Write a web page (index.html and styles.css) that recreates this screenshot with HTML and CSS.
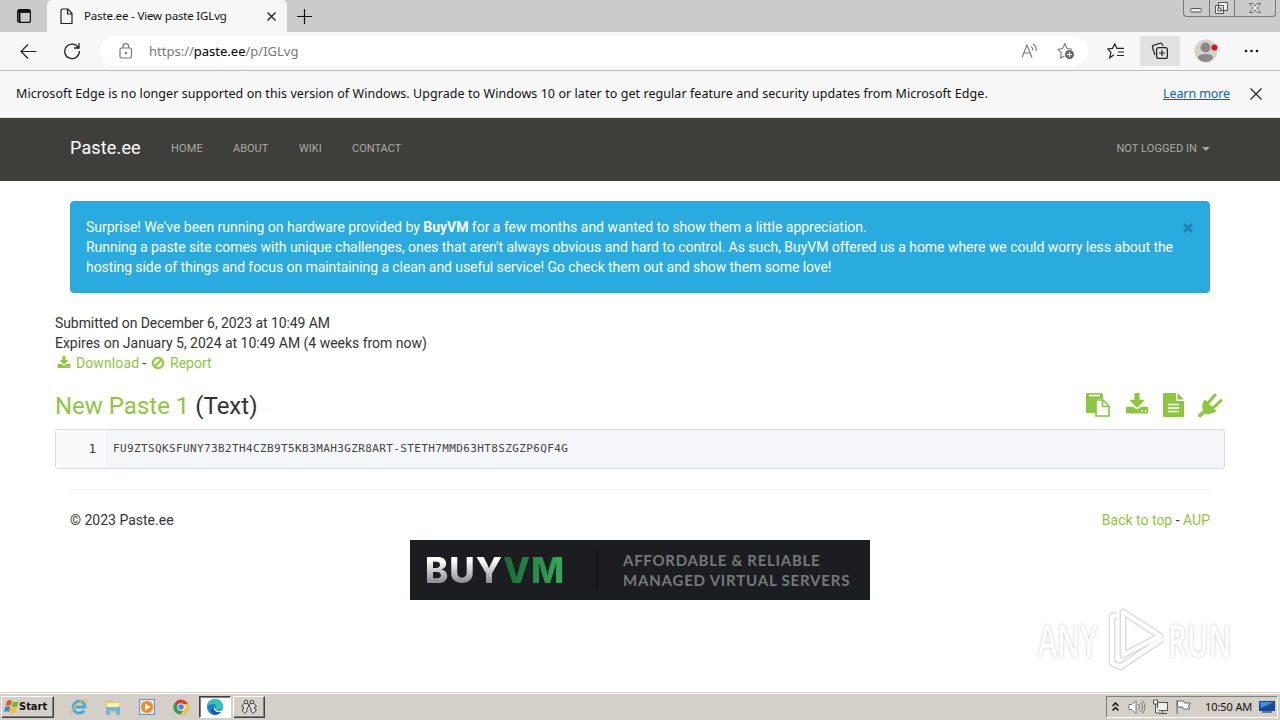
FILE: index.html
```html
<!DOCTYPE html>
<html lang="en">
<head>
    <meta charset="UTF-8">
    <meta name="viewport" content="width=device-width, initial-scale=1.0">
    <title>Paste.ee - View paste IGLvg</title>
    <link rel="stylesheet" href="styles.css">
</head>
<body>
    <svg width="0" height="0" class="defs">
        <symbol id="download" viewBox="0 0 1792 1792"><path d="M1344 1344q0-26-19-45t-45-19-45 19-19 45 19 45 45 19 45-19 19-45zm256 0q0-26-19-45t-45-19-45 19-19 45 19 45 45 19 45-19 19-45zm128-224v320q0 40-28 68t-68 28h-1472q-40 0-68-28t-28-68v-320q0-40 28-68t68-28h465l135 136q58 56 136 56t136-56l136-136h464q40 0 68 28t28 68zm-325-569q17 41-14 70l-448 448q-18 19-45 19t-45-19l-448-448q-31-29-14-70 17-39 59-39h256v-448q0-26 19-45t45-19h256q26 0 45 19t19 45v448h256q42 0 59 39z"/></symbol>
    </svg>

    <div class="tab-strip">
        <svg class="tab-actions" width="16" height="16" fill="none" stroke="#111" stroke-width="1.2"><rect x="1.600" y="1.600" width="12.800" height="12.800" rx="2"/><path d="M2 3.400h12" stroke-width="3"/><path d="M3.500 4v10" stroke-width="2"/></svg>
        <div class="tab">
            <svg width="13" height="17" fill="none" stroke="#222" stroke-width="1.2"><path d="M2 1h6l4 4.500v10H1V2zM7.500 1v5H12"/></svg>
            <span class="tab-title">Paste.ee - View paste IGLvg</span>
            <svg width="9" height="9" stroke="#222" stroke-width="1.4"><path d="M.5.5l8 8M8.500.5l-8 8"/></svg>
        </div>
        <svg class="new-tab" width="15" height="15" stroke="#111" stroke-width="1.2"><path d="M7.500 0v15M0 7.500h15"/></svg>
        <div class="window-buttons">
            <svg width="25" height="16" fill="#eee" stroke="#555"><rect x="6.500" y="8.500" width="11" height="3.500" rx="1.500"/></svg>
            <svg width="25" height="16" fill="#eee" stroke="#555"><path d="M8.500 2.500h9v8h-9zM5.500 5.500h8v8h-8z"/><rect x="8" y="8" width="3" height="3"/></svg>
            <svg width="41" height="16" fill="#eee" stroke="#666"><path d="M14.500 3.500h3.200l2.300 2.700 2.300-2.700h3.200l-3.700 4.500 3.700 4.500h-3.200L20 9.800l-2.300 2.700h-3.200l3.700-4.500z"/></svg>
        </div>
    </div>

    <div class="toolbar">
        <svg class="back" width="17" height="15" fill="none" stroke="#222" stroke-width="1.2"><path d="M16.500 7.500H1M8 .5l-7 7 7 7"/></svg>
        <svg class="reload" width="18" height="18" fill="none" stroke="#222" stroke-width="1.3"><path d="M15.500 6A7.300 7.300 0 1 0 16.300 9M16 1v5h-5"/></svg>
        <div class="address">
            <svg width="14" height="16" fill="none" stroke="#777" stroke-width="1.2"><rect x="1" y="5" width="11.500" height="10" rx="1.500"/><path d="M4 5V3.500a2.800 2.800 0 0 1 5.600 0V5"/><circle cx="6.800" cy="10" r=".6" fill="#777"/></svg>
            <span class="url">https://<b>paste.ee</b>/p/IGLvg</span>
            <svg class="read-aloud" width="17" height="16" fill="none" stroke="#777" stroke-width="1.1"><path d="M1 14.500L6 2l5 12.500M3 10h6M10 3.500q2 1 1.800 4M12 1q4 2.500 3 7"/></svg>
            <svg width="18" height="18" fill="none" stroke="#777" stroke-width="1.1"><path d="M7.500 14L3.500 16l.8-5L1 7.300l4.600-.8 2.300-4.700 2.200 4.700 5 .8"/><circle cx="12.500" cy="12.500" r="4.500" fill="#666" stroke="none"/><path d="M12.500 10v5M10 12.500h5" stroke="#fff"/></svg>
        </div>
        <svg class="favorites" width="18" height="18" fill="none" stroke="#222" stroke-width="1.2"><path d="M7 12.800l-4.300 3 1.200-5.500L.8 7l4.700-.6L7.800 2l2.100 4.400H17M11 10h6M10 13.500h7"/></svg>
        <div class="collections"><svg width="18" height="18" fill="none" stroke="#222" stroke-width="1.2"><path d="M4 13L1.500 5.500Q1 4 2.500 3.400L9 1.300q1.600-.5 2.200 1L12 4"/><rect x="5.600" y="5.600" width="10.800" height="10.800" rx="2"/><path d="M11 8v6M8 11h6"/></svg></div>
        <svg class="profile" width="24" height="24"><circle cx="12" cy="12" r="11.500" fill="#d4d2cf"/><circle cx="11.500" cy="8.500" r="5" fill="#8b8987"/><path d="M4 19q0-4 7.500-4t7.500 4q-3 4-7.500 4T4 19" fill="#8b8987"/><circle cx="20.500" cy="8.500" r="3" fill="#e01020"/></svg>
        <svg class="menu" width="15" height="4" fill="#111"><circle cx="2" cy="2" r="1.300"/><circle cx="7.500" cy="2" r="1.300"/><circle cx="13" cy="2" r="1.300"/></svg>
    </div>

    <div class="infobar">
        <span class="info-text">Microsoft Edge is no longer supported on this version of Windows. Upgrade to Windows 10 or later to get regular feature and security updates from Microsoft Edge.</span>
        <a class="learn-more">Learn more</a>
        <svg width="12" height="12" stroke="#222" stroke-width="1.2"><path d="M.5.5l11 11M11.500.5l-11 11"/></svg>
    </div>

    <div class="navbar">
        <a class="brand">Paste.ee</a>
        <a class="home">HOME</a>
        <a class="about">ABOUT</a>
        <a class="wiki">WIKI</a>
        <a class="contact">CONTACT</a>
        <a class="login">NOT LOGGED IN</a>
        <span class="caret"></span>
    </div>

    <div class="page">
        <div class="alert">
            <div class="alert-text">
                <div class="a1">Surprise! We've been running on hardware provided by <strong>BuyVM</strong> for a few months and wanted to show them a little appreciation.</div>
                <div class="a2">Running a paste site comes with unique challenges, ones that aren't always obvious and hard to control. As such, BuyVM offered us a home where we could worry less about the</div>
                <div class="a3">hosting side of things and focus on maintaining a clean and useful service! Go check them out and show them some love!</div>
            </div>
            <svg width="10" height="10" stroke="#2085ae" stroke-width="3"><path d="M1 1l8 8M9 1l-8 8"/></svg>
        </div>

        <div class="details">
            <div class="submitted">Submitted on December 6, 2023 at 10:49 AM</div>
            <div class="expires">Expires on January 5, 2024 at 10:49 AM (4 weeks from now)</div>
            <div class="actions">
                <svg width="14" height="14"><use href="#download"/></svg>
                <a class="dl">Download</a><span class="dash">-</span>
                <svg width="14" height="14" viewBox="0 0 1792 1792"><path d="M1440 893q0-161-87-295l-754 753q137 89 297 89 111 0 211.500-43.500t173.500-116.500 116-174.500 43-212.500zm-999 299l755-754q-135-91-300-91-148 0-273 73t-198 199-73 274q0 162 89 299zm1223-299q0 157-61 300t-163.500 246-245 164-298.500 61-298.500-61-245-164-163.500-246-61-300 61-299.500 163.500-245.500 245-164 298.500-61 298.500 61 245 164 163.500 245.500 61 299.500z" stroke="#8dc63f" stroke-width="60"/></svg>
                <a class="report">Report</a>
            </div>
        </div>

        <div class="paste-head">
            <h3><a>New Paste 1</a> (Text)</h3>
            <div class="paste-tools">
                <svg width="25" height="24"><path d="M1 0h14q2 0 2 2v4H12q-2 0-2 2v12H1q-1 0-1-1V1q0-1 1-1z"/><path d="M3 2.500h11" stroke="#fff" stroke-width="1.700"/><path d="M10 7h7l6 6v10H10zM16.500 7v6.500h6.500" fill="#fff" stroke="#8dc63f" stroke-width="1.700"/></svg>
                <svg width="24" height="24"><use href="#download"/></svg>
                <svg width="21" height="24"><path d="M1 0h12v7q0 1 1 1h7v15q0 1-1 1H1q-1 0-1-1V1q0-1 1-1zM14.500 0q1 .3 6 6.500h-6z"/><path d="M5 11.500h11M5 15h11M5 18.500h11" stroke="#fff" stroke-width="1.500"/></svg>
                <svg width="25" height="25"><path d="M7 6.500L18.500 18q-4.500 4.500-11.500 2.500L2.500 24.500 0 23.500l.5-2.500L5 17.500Q3 11 7 6.500z"/><path d="M10.500 9.500l6.500-7.500M15.500 14.500l7.500-7" stroke="#8dc63f" stroke-width="3" stroke-linecap="round"/></svg>
            </div>
        </div>

        <div class="code-box">
            <div class="line-no">1</div>
            <code>FU9ZTSQKSFUNY73B2TH4CZB9T5KB3MAH3GZR8ART-STETH7MMD63HT8SZGZP6QF4G</code>
        </div>

        <div class="footer">
            <span class="copy">© 2023 Paste.ee</span>
            <span class="foot-links"><a>Back to top</a> - <a>AUP</a></span>
        </div>

        <div class="banner">
            <div class="buyvm"><span class="buy">BUY</span><span class="vm">VM</span></div>
            <div class="slogan">
                <div class="s1">AFFORDABLE &amp; RELIABLE</div>
                <div class="s2">MANAGED VIRTUAL SERVERS</div>
            </div>
        </div>
    </div>

    <div class="watermark">
        <span>ANY</span>
        <svg width="62" height="66" fill="none" stroke-linejoin="round"><path d="M18 5v43L55 29zM12 9H7v47l8 4 42-28" stroke="#ddd" stroke-width="7"/><path d="M18 5v43L55 29zM12 9H7v47l8 4 42-28" stroke="#fff" stroke-width="4"/></svg>
        <span>RUN</span>
    </div>

    <div class="taskbar">
        <div class="start">
            <svg width="15" height="15"><path d="M3 2q3-2 5 0L6.500 7q-2-1.500-5 0z" fill="#e8562a"/><path d="M9 2.500q2 1.500 5.500 0L13 7.500q-3 1.500-5.500 0z" fill="#75b82b"/><path d="M1.200 8q3-1.500 5 0L5 13q-2-1.500-5 0z" fill="#3689d8"/><path d="M7.200 8.500q2 1.500 5.500 0l-1.400 5q-3 1.500-5.500 0z" fill="#f6bd20"/></svg>
            <span>Start</span>
        </div>
        <div class="launch">
            <svg width="18" height="18" fill="none"><path d="M14 12.500A6 6 0 1 1 15 9H5" stroke="#45a9e0" stroke-width="2.800"/><path d="M2 16C-1 13 12 0 16 2q1.500 1 0 3" stroke="#e8bd4a" stroke-width="1.300"/></svg>
            <svg width="18" height="18"><path d="M2 2h5l1 2h8v11H2z" fill="#e5c765"/><path d="M3 5h12v5H3z" fill="#fff2b8"/><path d="M2 9h14v8h-4v-4H6v4H2z" fill="#78b5dc"/></svg>
            <svg width="18" height="18"><rect x="1.500" y="1.500" width="15" height="15" fill="#d5e7f4" stroke="#629ac4"/><circle cx="9" cy="9" r="6" fill="#f38a19"/><path d="M7 5.500v7L12.500 9z" fill="#fff"/></svg>
            <svg width="18" height="18"><circle cx="9" cy="9" r="7.500" fill="#e33b2e"/><path d="M2.500 5.200A7.500 7.500 0 0 0 8.500 16.500L12 11 9 9z" fill="#2ba24c"/><path d="M8.500 16.500A7.500 7.500 0 0 0 15.800 6H9l3 5z" fill="#fcc934"/><circle cx="9" cy="9" r="3.700" fill="#fff"/><circle cx="9" cy="9" r="2.800" fill="#4285f4"/></svg>
        </div>
        <div class="task active"><svg width="18" height="18"><circle cx="9" cy="9" r="8" fill="#1683d0"/><path d="M1 8Q2 1 9 1q7 .5 8 7 0 4-5 4-3 0-2-2 1-4-3-4-4 0-6 2z" fill="#36c6b0"/><path d="M7 8q-2 6 8 6-3 3-7 3-5-4-1-9z" fill="#1356a4"/><path d="M9 8q-1 4 3 5 3 0 4.500-1l-1 2Q8 15 8 10z" fill="#fff"/></svg></div>
        <div class="task"><svg width="18" height="16" fill="#e4e1dc" stroke="#444"><path d="M1.500 7.500L4.500 4h3l1.500 3-2 2v3l-2 2.500L2.500 12v-2h1V8z"/><path d="M9 7l1.500-3h3l3 3.500-2 .5v2h1.500v2L13 14.500 11 12V9z"/><circle cx="6" cy="3" r="1.800"/><circle cx="12" cy="3" r="1.800"/></svg></div>
        <div class="tray">
            <svg width="7" height="10" fill="none" stroke="#111" stroke-width="1.500"><path d="M.5 4l3-3 3 3M.5 8.500l3-3 3 3"/></svg>
            <svg class="volume" width="18" height="16" fill="#fff" stroke="#777"><path d="M1 5.500h3l4-4v13l-4-4H1z"/><path d="M10.500 5q2 3 0 6M12.500 3q4 5 0 10M14.500 1.500q5 6.500 0 13" fill="none"/></svg>
            <svg class="network" width="17" height="16" fill="#eee" stroke="#555"><rect x="5.500" y="3.500" width="10" height="8"/><path d="M7 14.500h8M10.500 12v2M1.500 1v4h4V1zM3.500 5v9h4" /></svg>
            <svg class="flag" width="17" height="16" fill="#fff" stroke="#666"><path d="M2 15V1M2.500 2h6l1 2h6l-2 3 1 3h-6l-1-2h-5z"/></svg>
            <span class="clock">10:50 AM</span>
            <svg class="desktop" width="16" height="14"><rect y="1" width="16" height="10" fill="#164aa2"/><path d="M1 2h14L2 8z" fill="#468ee0"/><path d="M3 12h10" stroke="#777" stroke-width="2"/></svg>
        </div>
    </div>
</body>
</html>
```
FILE: styles.css
```css
* {
    box-sizing: border-box;
}
body {
    margin: 0;
    width: 1280px;
    height: 720px;
    overflow: hidden;
    display: flex;
    flex-direction: column;
    background: #fff;
    font-family: Roboto, sans-serif;
    font-size: 14px;
    line-height: 20px;
    color: #333;
}
svg {
    display: block;
    flex: none;
}
.defs {
    position: absolute;
}
span, a, code {
    white-space: nowrap;
}
.tab-strip, .toolbar, .infobar, .taskbar {
    display: flex;
    align-items: center;
    flex: none;
    font-family: "Noto Sans", sans-serif;
    color: #111;
}
.tab-strip {
    height: 32px;
    background: #cbcbcb;
}
.tab-actions {
    margin-left: 16px;
}
.tab {
    display: flex;
    align-items: center;
    align-self: stretch;
    width: 240px;
    margin-left: 15px;
    padding-left: 13px;
    background: #f7f7f7;
    border-radius: 5px 5px 0 0;
}
.tab-title {
    width: 183px;
    margin-left: 11px;
    font-size: 11.5px;
    letter-spacing: -0.17px;
}
.new-tab {
    margin-left: 10px;
}
.window-buttons {
    display: flex;
    align-self: flex-start;
    height: 17px;
    margin-left: auto;
    margin-right: 4px;
    border: 1px solid #777;
    border-top: 0;
    border-radius: 0 0 4px 4px;
}
.window-buttons svg + svg {
    border-left: 1px solid #777;
}
.toolbar {
    height: 39px;
    background: #f7f7f7;
    border-bottom: 1px solid #bbb;
}
.back {
    margin-left: 20px;
}
.reload {
    margin-left: 26px;
}
.address {
    display: flex;
    align-items: center;
    width: 988px;
    height: 30px;
    margin-left: 19px;
    padding-left: 19px;
    border-radius: 15px;
    background: #fff;
}
.url {
    width: 872px;
    margin-left: 16px;
    font-size: 13px;
    color: #777;
}
.url b {
    font-weight: normal;
    color: #000;
}
.read-aloud {
    margin-right: 19px;
}
.favorites {
    margin-left: 19px;
}
.collections {
    display: flex;
    align-items: center;
    justify-content: center;
    width: 40px;
    height: 30px;
    margin-left: 15px;
    background: #e2e2e2;
}
.profile {
    margin-left: 14px;
}
.menu {
    margin-left: 26px;
}
.infobar {
    height: 47px;
    padding-left: 16px;
    background: #f7f7f7;
    border-bottom: 1px solid #e5e5dc;
    font-size: 12.5px;
}
.info-text {
    width: 1147px;
    letter-spacing: 0.063px;
}
.learn-more {
    width: 87px;
    letter-spacing: -0.1px;
    color: #0067b8;
    text-decoration: underline;
}
.navbar {
    display: flex;
    align-items: center;
    flex: none;
    height: 63px;
    padding: 0 70px;
    padding-bottom: 2px;
    background: #3e3f3a;
    font-size: 11px;
    color: #aaa9a4;
}
.brand {
    width: 101px;
    padding-bottom: 2px;
    font-size: 18px;
    letter-spacing: 0.15px;
    color: #fff;
}
.home {
    width: 62px;
    letter-spacing: 0.2px;
}
.about {
    width: 66px;
}
.wiki {
    width: 53px;
}
.login {
    margin-left: auto;
    letter-spacing: 0.08px;
}
.caret {
    margin-left: 5px;
    border: 4px solid transparent;
    border-top-color: #aaa9a4;
    border-bottom: 0;
}
.page {
    flex: 1;
    width: 1170px;
    margin: 0 auto;
    padding-top: 20px;
}
.alert {
    display: flex;
    height: 92px;
    margin: 0 15px;
    padding: 15px;
    border: 1px solid #29a5dc;
    border-radius: 4px;
    background: #29abe0;
    color: #fff;
}
.alert-text {
    width: 1097px;
    white-space: nowrap;
}
.a1 {
    letter-spacing: -0.018px;
}
.a2 {
    letter-spacing: -0.035px;
}
.a3 {
    letter-spacing: -0.076px;
}
.alert svg {
    margin-top: 6px;
}
.details {
    margin-top: 20px;
}
.submitted {
    letter-spacing: -0.08px;
}
.expires {
    letter-spacing: -0.02px;
}
.actions {
    display: flex;
    align-items: center;
    padding-left: 2px;
}
a {
    color: inherit;
}
.actions a, h3 a, .foot-links a {
    color: #8dc63f;
}
.actions svg, .paste-tools svg {
    fill: #8dc63f;
}
.dl {
    margin-left: 5px;
    letter-spacing: 0.1px;
}
.dash {
    margin: 0 5px 0 3px;
}
.report {
    margin-left: 5px;
}
.paste-head {
    display: flex;
    justify-content: space-between;
    height: 56px;
    padding-top: 19px;
}
h3 {
    margin: 0;
    font-size: 24px;
    font-weight: normal;
    line-height: 28px;
}
.paste-tools {
    display: flex;
    gap: 14px;
    padding: 1px 2px 0 0;
}
.code-box {
    display: flex;
    align-items: center;
    height: 40px;
    border: 1px solid #ddd;
    border-radius: 3px;
    background: #f5f6fa;
    font-family: "DejaVu Sans Mono", monospace;
}
.line-no {
    width: 50px;
    height: 38px;
    padding-right: 10px;
    background: #fafafa;
    line-height: 38px;
    text-align: right;
    font-size: 12px;
}
code {
    margin-left: 7px;
    font-family: inherit;
    font-size: 11px;
    letter-spacing: 0.382px;
    color: #444;
}
.footer {
    display: flex;
    justify-content: space-between;
    height: 51px;
    margin: 20px 15px 0;
    padding-top: 20px;
    border-top: 1px solid #f3f3f0;
}
.banner {
    display: flex;
    align-items: center;
    width: 460px;
    height: 60px;
    margin: 0 auto;
    padding-left: 15px;
    background: #1b1d20;
    font-family: Lato, sans-serif;
}
.buyvm {
    display: flex;
    align-items: center;
    width: 173px;
    height: 38px;
    border-right: 1px solid #0a0b0c;
    font-family: Inter, "Open Sans", sans-serif;
    font-size: 35px;
    font-weight: 800;
    letter-spacing: 1px;
}
.buy, .vm {
    line-height: 38px;
    color: transparent;
    background: linear-gradient(#fff 25%, #8f9298 80%);
    -webkit-background-clip: text;
    background-clip: text;
}
.vm {
    background-image: linear-gradient(90deg, #176b35, #35ad5c);
}
.slogan {
    margin-left: 25px;
    font-size: 15px;
    font-weight: bold;
    letter-spacing: 0.8px;
    white-space: nowrap;
    color: #76787b;
}
.s1 {
    letter-spacing: 0.72px;
}
.watermark {
    position: absolute;
    left: 1038px;
    top: 607px;
    display: flex;
    align-items: center;
    width: 196px;
    font-family: "Open Sans", sans-serif;
    font-size: 45px;
    font-weight: 600;
    line-height: 66px;
    color: #fff;
    text-shadow: 0 0 2px #ccc, 0 0 4px #ddd;
}
.watermark span {
    width: 67px;
    transform: scaleX(0.65);
    transform-origin: left;
}
.watermark svg {
    margin-right: 1px;
}
.taskbar {
    height: 28px;
    border-top: 1px solid #d4d0c8;
    box-shadow: inset 0 1px #fff;
    background: #d4d0c8;
    font-size: 11px;
}
.start, .task {
    display: flex;
    align-items: center;
    height: 22px;
    border: 1px solid;
    border-color: #fff #404040 #404040 #fff;
    box-shadow: inset -1px -1px #808080;
}
.start {
    width: 53px;
    margin-left: 1px;
    padding-left: 2px;
    font-family: "DejaVu Sans Condensed", "DejaVu Sans", sans-serif;
    font-weight: bold;
}
.launch {
    display: flex;
    gap: 16px;
    width: 129px;
    margin-left: 16px;
}
.task {
    justify-content: center;
    width: 32px;
}
.active {
    margin-right: 2px;
    background: #fff;
    border-color: #404040 #fff #fff #404040;
    box-shadow: inset 1px 1px #808080;
}
.tray {
    display: flex;
    align-items: center;
    width: 172px;
    height: 22px;
    margin-left: auto;
    margin-right: 2px;
    padding-left: 5px;
    border: 1px solid;
    border-color: #808080 #fff #fff #808080;
}
.volume {
    margin-left: 9px;
}
.network, .flag {
    margin-left: 6px;
}
.clock {
    width: 54px;
    margin-left: 13px;
    letter-spacing: -0.1px;
}
```
